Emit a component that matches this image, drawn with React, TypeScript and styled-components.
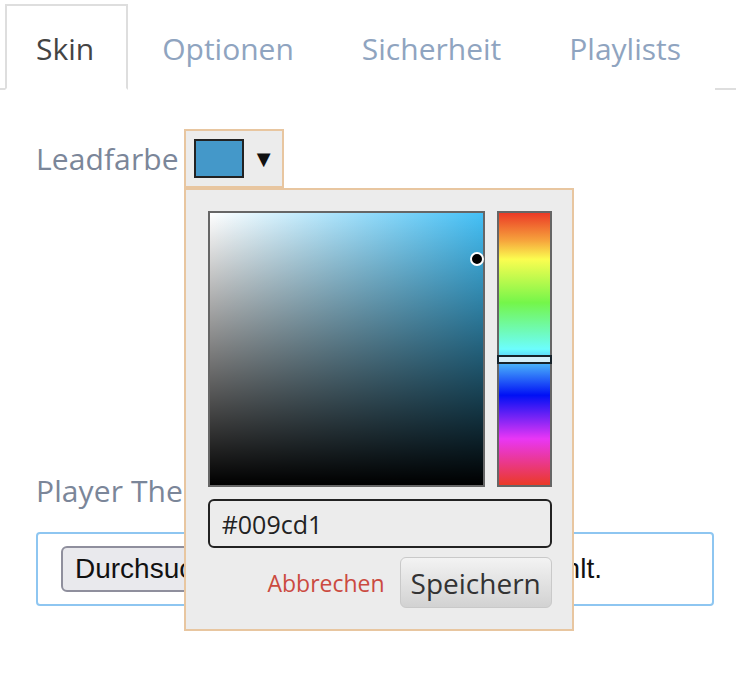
import React, { useState } from "react";
import styled, { createGlobalStyle } from "styled-components";

const GlobalStyle = createGlobalStyle`
  html, body {
    margin: 0;
    padding: 0;
    background: #fff;
    font-family: "Open Sans", "Liberation Sans", sans-serif;
  }
`;

const tabs = ["Skin", "Optionen", "Sicherheit", "Playlists"];

const Page = styled.div`
  width: 736px;
  height: 684px;
  overflow: hidden;
`;

const TabBar = styled.div`
  display: flex;
  padding: 4px 0 0 5px;
  border-bottom: 2px solid #dedede;
`;

const Tab = styled.div<{ $active?: boolean }>`
  height: 80px;
  display: flex;
  align-items: center;
  padding: 2px 32px 0 29px;
  margin-bottom: -2px;
  font-size: 30px;
  color: ${(p) => (p.$active ? "#444" : "#8fa4c0")};
  background: #fff;
  border: 2px solid ${(p) => (p.$active ? "#dedede" : "transparent")};
  border-bottom-color: ${(p) => (p.$active ? "#fff" : "transparent")};
  & + & {
    padding-left: 32px;
  }
`;

const Content = styled.div`
  padding: 39px 0 0 36px;
`;

const FieldRow = styled.div`
  display: flex;
  align-items: center;
  gap: 5px;
`;

const Label = styled.div`
  font-size: 30px;
  letter-spacing: 0.1px;
  color: #7b8699;
`;

const PickerAnchor = styled.div`
  position: relative;
`;

const ColorButton = styled.div`
  box-sizing: border-box;
  width: 100px;
  height: 59px;
  display: flex;
  align-items: center;
  justify-content: space-between;
  padding: 0 11px 0 8px;
  background: #ececec;
  border: 2px solid #e8c6a0;
`;

const Swatch = styled.div<{ $color: string }>`
  box-sizing: border-box;
  width: 50px;
  height: 39px;
  background: ${(p) => p.$color};
  border: 2px solid #222;
`;

const Arrow = styled.span`
  font-family: "DejaVu Sans", sans-serif;
  font-size: 18px;
  color: #111;
`;

const Popup = styled.div`
  position: absolute;
  left: 0;
  top: 100%;
  z-index: 2;
  box-sizing: border-box;
  width: 390px;
  height: 443px;
  padding: 21px 20px 21px 22px;
  background: #ececec;
  border: 2px solid #e8c6a0;
  display: flex;
  flex-direction: column;
  gap: 12px;
`;

const PickerArea = styled.div`
  display: flex;
  gap: 12px;
`;

const Saturation = styled.div<{ $hue: string }>`
  position: relative;
  box-sizing: border-box;
  width: 277px;
  height: 276px;
  border: 2px solid #666;
  background: linear-gradient(to bottom, rgba(0, 0, 0, 0), #000),
    linear-gradient(to right, #fff, ${(p) => p.$hue});
`;

const SatMarker = styled.div`
  position: absolute;
  width: 10px;
  height: 10px;
  margin: -7px 0 0 -7px;
  border-radius: 50%;
  background: #000;
  border: 2px solid #fff;
`;

const HueBar = styled.div`
  position: relative;
  box-sizing: border-box;
  width: 55px;
  height: 276px;
  border: 2px solid #666;
  background: linear-gradient(
    to bottom,
    #eb3a26 0%,
    #f6a23c 10%,
    #fbfd50 17%,
    #74f64a 33%,
    #6cfdfd 50%,
    #0010f5 67%,
    #e936f5 83%,
    #eb3a26 100%
  );
`;

const HueMarker = styled.div`
  position: absolute;
  left: -2px;
  right: -2px;
  height: 5px;
  background: #d4effb;
  border: 2px solid #17232b;
  margin-top: -5px;
`;

const HexInput = styled.input`
  box-sizing: border-box;
  width: 344px;
  height: 49px;
  padding: 0 12px;
  font-family: "Open Sans", sans-serif;
  font-size: 25px;
  color: #222;
  background: #ececec;
  border: 2px solid #222;
  border-radius: 6px;
  outline: none;
`;

const Actions = styled.div`
  display: flex;
  justify-content: flex-end;
  align-items: center;
  gap: 15px;
  margin-top: -3px;
`;

const CancelLink = styled.span`
  font-size: 23px;
  color: #cb4a40;
`;

const SaveButton = styled.button`
  box-sizing: border-box;
  width: 152px;
  height: 51px;
  font-family: "Open Sans", sans-serif;
  font-size: 28px;
  color: #333;
  background: linear-gradient(to bottom, #f3f3f3, #d2d2d2);
  border: 1px solid #c9c9c9;
  border-radius: 6px;
  padding: 0;
`;

const SecondLabel = styled(Label)`
  margin-top: 282px;
`;

const FileBox = styled.div`
  box-sizing: border-box;
  margin-top: 21px;
  width: 678px;
  height: 74px;
  border: 2px solid #8ec6f1;
  border-radius: 4px;
  display: flex;
  align-items: center;
  padding-left: 23px;
  font-family: "Liberation Sans", Arial, sans-serif;
  font-size: 28px;
  color: #111;
`;

const FileButton = styled.span`
  box-sizing: border-box;
  height: 46px;
  display: flex;
  align-items: center;
  padding: 0 12px;
  background: #e9e9ed;
  border: 2px solid #8f8f9d;
  border-radius: 6px;
  margin-right: 18px;
`;

export default function App() {
  const [hex] = useState("#009cd1");
  const sat = 0.98;
  const val = 0.17;
  const hue = 0.54;
  return (
    <Page>
      <GlobalStyle />
      <TabBar>
        {tabs.map((t, i) => (
          <Tab key={t} $active={i === 0}>
            {t}
          </Tab>
        ))}
      </TabBar>
      <Content>
        <FieldRow>
          <Label>Leadfarbe</Label>
          <PickerAnchor>
            <ColorButton>
              <Swatch $color="#4498c9" />
              <Arrow>▼</Arrow>
            </ColorButton>
            <Popup>
              <PickerArea>
                <Saturation $hue="#44c0f6">
                  <SatMarker style={{ left: `${sat * 100}%`, top: `${val * 100}%` }} />
                </Saturation>
                <HueBar>
                  <HueMarker style={{ top: `${hue * 100}%` }} />
                </HueBar>
              </PickerArea>
              <HexInput value={hex} readOnly />
              <Actions>
                <CancelLink>Abbrechen</CancelLink>
                <SaveButton>Speichern</SaveButton>
              </Actions>
            </Popup>
          </PickerAnchor>
        </FieldRow>
        <SecondLabel>Player Theme</SecondLabel>
        <FileBox>
          <FileButton>Durchsuchen…</FileButton>
          <span>Keine Datei ausgewählt.</span>
        </FileBox>
      </Content>
    </Page>
  );
}
